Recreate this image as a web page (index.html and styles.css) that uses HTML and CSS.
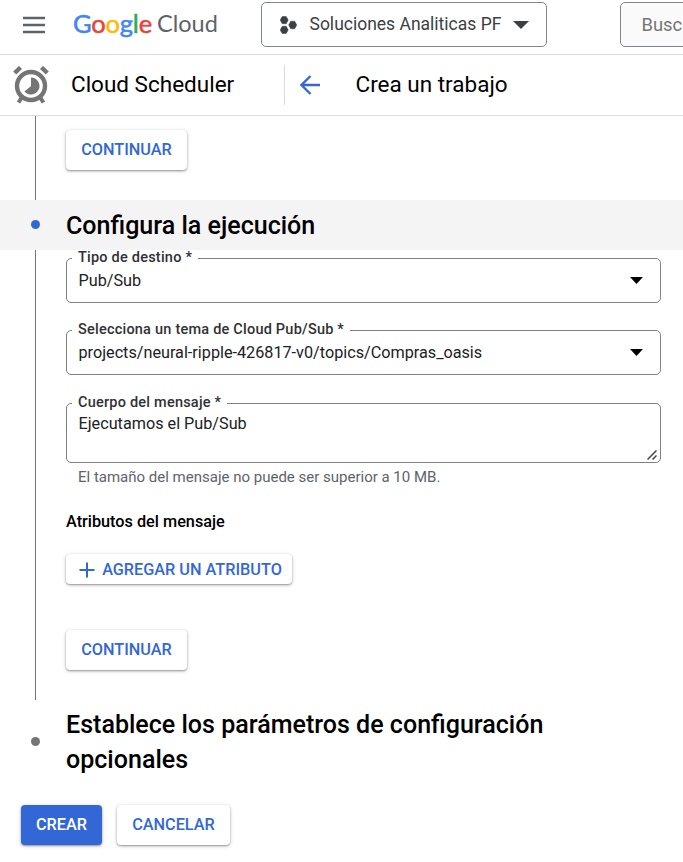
FILE: index.html
```html
<!DOCTYPE html>
<html lang="es">
<head>
<meta charset="utf-8">
<title>Cloud Scheduler</title>
<link rel="stylesheet" href="styles.css">
</head>
<body>
<header class="topbar">
  <svg class="menu" width="24" height="18" viewBox="0 0 24 18"><path d="M1 2h22M1 9h22M1 16h22" stroke="#5f6368" stroke-width="2.600"/></svg>
  <div class="logo"><span class="google"><span class="b">G</span><span class="r">o</span><span class="y">o</span><span class="b">g</span><span class="g">l</span><span class="r">e</span></span><span class="cloud">Cloud</span></div>
  <div class="project">
    <svg width="17" height="18" viewBox="0 0 17 18" fill="#3c4043"><path d="M2.200 .5h4l2 3.600-2 3.600h-4L.2 4.100zM2.200 10.300h4l2 3.600-2 3.600h-4l-2-3.600zM10.700 5.200h4l2 3.800-2 3.800h-4l-2-3.800z" stroke="#3c4043" stroke-width=".5" stroke-linejoin="round"/></svg>
    <span class="project-name">Soluciones Analiticas PF</span>
    <svg width="16" height="8" viewBox="0 0 16 8" fill="#3c4043"><path d="M0 0h16L8 8z"/></svg>
  </div>
  <div class="search">Busc</div>
</header>
<nav class="productbar">
  <svg class="clock" width="36" height="38" viewBox="0 0 36 38">
    <g fill="none" stroke="#757575">
      <circle cx="18" cy="20" r="14" stroke-width="4.400"/>
      <path d="M1.700 7L7.500 1.500M34.300 7L28.500 1.500" stroke-width="4.400"/>
      <path d="M8.500 32L5.500 36.500M27.500 32L30.500 36.500" stroke-width="4"/>
    </g>
    <path d="M18 20V11.500A8.500 8.500 0 1 1 11.500 25.500z" fill="#757575"/>
  </svg>
  <span class="product">Cloud Scheduler</span>
  <div class="divider"></div>
  <svg class="back" width="20" height="20" viewBox="0 0 20 20"><path d="M20 10H2M10.500 1L1.500 10l9 9" fill="none" stroke="#3367d6" stroke-width="2.300"/></svg>
  <h1 class="title">Crea un trabajo</h1>
</nav>
<main>
  <section class="step-body step-first"><button class="btn">CONTINUAR</button></section>
  <div class="step-head active"><i class="dot"></i><h2>Configura la ejecución</h2></div>
  <section class="step-body step-run">
    <div class="field">
      <span class="label">Tipo de destino *</span>
      <span class="value">Pub/Sub</span>
      <svg class="arrow" width="13" height="7" viewBox="0 0 13 7"><path d="M0 0h13L6.500 7z"/></svg>
    </div>
    <div class="field">
      <span class="label">Selecciona un tema de Cloud Pub/Sub *</span>
      <span class="value">projects/neural-ripple-426817-v0/topics/Compras_oasis</span>
      <svg class="arrow" width="13" height="7" viewBox="0 0 13 7"><path d="M0 0h13L6.500 7z"/></svg>
    </div>
    <div class="field area">
      <span class="label">Cuerpo del mensaje *</span>
      <span class="value">Ejecutamos el Pub/Sub</span>
      <svg class="grip" width="10" height="10" viewBox="0 0 10 10"><path d="M.5 9.500l9-9M5.500 9.500l4-4" stroke="#444" stroke-width="1.500"/></svg>
    </div>
    <p class="hint">El tamaño del mensaje no puede ser superior a 10 MB.</p>
    <h3>Atributos del mensaje</h3>
    <button class="btn add"><svg width="16" height="16" viewBox="0 0 16 16"><path d="M8 .5v15M.5 8h15" stroke="#3367d6" stroke-width="2"/></svg><span>AGREGAR UN ATRIBUTO</span></button>
    <button class="btn next">CONTINUAR</button>
  </section>
  <div class="step-head last"><i class="dot"></i><h2>Establece los parámetros de configuración opcionales</h2></div>
  <footer><button class="btn primary">CREAR</button><button class="btn cancel">CANCELAR</button></footer>
</main>
</body>
</html>
```
FILE: styles.css
```css
* { box-sizing: border-box; }
body { margin: 0; width: 683px; height: 862px; overflow: hidden; background: #fff; color: #000; font-family: Roboto, sans-serif; }
h1, h2, h3, p { margin: 0; }
svg { display: block; flex: none; }
.topbar { display: flex; height: 55px; border-bottom: 1px solid #dadce0; align-items: flex-start; overflow: hidden; white-space: nowrap; }
.menu { margin: 16px 0 0 22px; }
.logo { display: flex; flex: none; width: 188px; margin-left: 27px; padding-top: 8px; font: 25.5px/30px Lato, sans-serif; }
.google { width: 84px; letter-spacing: -.2px; -webkit-text-stroke: .5px; }
.cloud { color: #5f6368; font-size: 23.5px; }
.b { color: #4285f4; } .r { color: #ea4335; } .y { color: #fbbc04; } .g { color: #34a853; }
.project { flex: none; width: 286px; height: 45px; margin-top: 2px; border: 1px solid #80868b; border-radius: 5px; display: flex; align-items: center; padding-left: 18px; color: #3c4043; font-size: 17.5px; }
.project-name { width: 204px; margin-left: 12.500px; margin-right: -.5px; padding-bottom: 1px; }
.search { flex: none; width: 100px; height: 45px; margin: 2px 0 0 73px; border: 1px solid #80868b; border-radius: 5px; background: #fafafa; color: #757575; font-size: 18.4px; line-height: 43px; padding-left: 20.5px; }
.productbar { display: flex; align-items: center; height: 61px; border-bottom: 1px solid #dadce0; }
.clock { margin-left: 13px; }
.product { width: 213px; margin-left: 22px; padding-bottom: 3px; font-size: 22.5px; }
.divider { width: 1px; height: 40px; background: #dadce0; }
.back { margin-left: 15px; }
.title { margin-left: 35.5px; padding-bottom: 3px; font-size: 22.5px; font-weight: 400; }
.step-body { margin-left: 35px; border-left: 1px solid #757575; padding-left: 30px; }
.step-first { height: 84px; padding-top: 14px; }
.btn { display: flex; align-items: center; justify-content: center; width: 121px; height: 40px; padding: 0 0 2px; border: 0; border-radius: 4px; background: #fff; color: #3367d6; font: 500 16.25px Roboto, sans-serif; box-shadow: 0 1px 2px rgba(0,0,0,.36), 0 1px 5px rgba(0,0,0,.14); }
.step-head { display: flex; align-items: center; height: 50px; }
.active { background: #f4f4f4; }
.dot { flex: none; width: 9px; height: 9px; border-radius: 50%; background: #757575; margin: 0 26px 1px 31px; }
.active .dot { background: #3367d6; }
h2 { font-size: 25.05px; line-height: 35px; font-weight: 500; }
.step-run { height: 450px; padding-top: 8px; }
.field { position: relative; display: flex; align-items: center; width: 595px; height: 45px; margin-bottom: 27px; border: 1px solid #808080; border-radius: 5px; padding: 0 17px 0 11.5px; justify-content: space-between; font-size: 16.22px; color: #202124; }
.field:nth-child(2) { margin-bottom: 28px; }
.label { position: absolute; left: 5px; top: -8px; height: 14px; padding: 0 6px; background: #fff; font-size: 14.5px; letter-spacing: .22px; line-height: 14px; font-weight: 500; white-space: nowrap; color: #303134; }
.field.area { height: 60px; align-items: flex-start; padding: 10px 3px 2px 11.5px; margin-bottom: 0; }
.area .value { line-height: 20px; }
.grip { align-self: flex-end; }
.hint { margin: 4px 0 0 12px; font-size: 15px; line-height: 20px; color: #5f6368; }
h3 { margin-top: 25px; font-size: 16.25px; line-height: 20px; font-weight: 500; }
.add { width: 226px; height: 30px; margin-top: 22px; padding: 1px 0 0 3px; gap: 7px; }
.next { margin-top: 46px; }
.last { height: 84px; padding-right: 100px; }
.last .dot { margin-bottom: 2px; }
footer { display: flex; gap: 15px; margin: 21px 0 0 21px; }
.primary { width: 81px; background: #3367d6; color: #fff; }
.cancel { width: 113px; }
```
